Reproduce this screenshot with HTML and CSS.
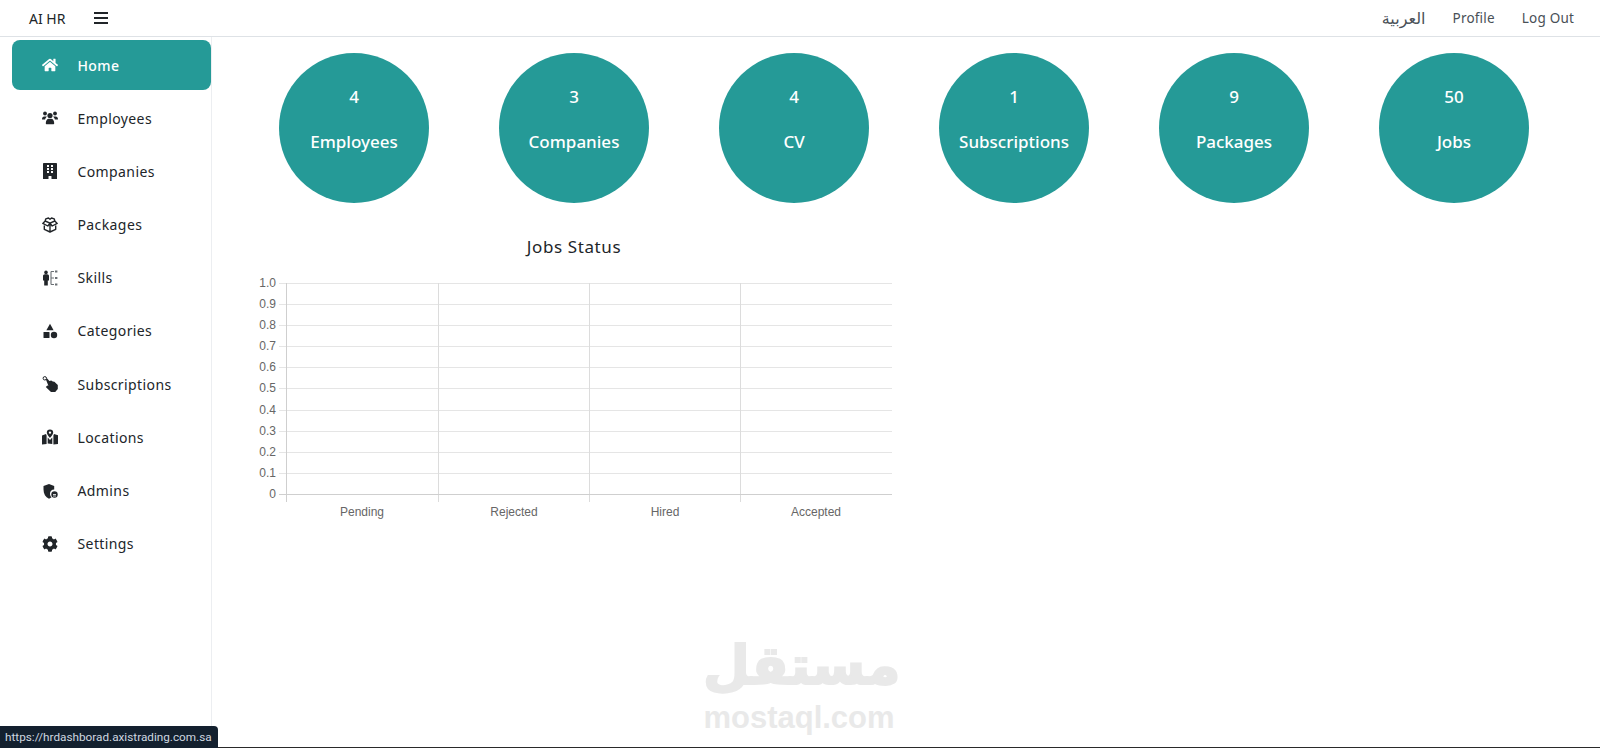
FILE: index.html
```html
<!DOCTYPE html>
<html lang="en">
<head>
    <meta charset="UTF-8">
    <meta name="viewport" content="width=device-width, initial-scale=1.0">
    <title>AI HR</title>
    <link rel="stylesheet" href="styles.css">
</head>
<body>
    <div class="navbar">
        <div class="navbar-left">
            <a class="brand">AI HR</a>
            <svg class="burger" viewBox="0 0 14 12" width="14" height="12"><path d="M0 1h14M0 6h14M0 11h14" stroke="#212529" stroke-width="2" fill="none"/></svg>
        </div>
        <div class="navbar-right">
            <a class="top-link top-link-ar" lang="ar">العربية</a>
            <a class="top-link">Profile</a>
            <a class="top-link">Log Out</a>
        </div>
    </div>

    <div class="wrapper">
        <div class="sidebar">
            <a class="side-item active">
                <svg class="side-icon" viewBox="0 0 576 512"><path d="M280.37 148.26L96 300.11V464a16 16 0 0 0 16 16l112.06-.29a16 16 0 0 0 15.92-16V368a16 16 0 0 1 16-16h64a16 16 0 0 1 16 16v95.64a16 16 0 0 0 16 16.05L464 480a16 16 0 0 0 16-16V300L295.67 148.26a12.19 12.19 0 0 0-15.3 0zM571.6 251.47L488 182.56V44.05a12 12 0 0 0-12-12h-56a12 12 0 0 0-12 12v72.61L318.47 43a48 48 0 0 0-61 0L4.34 251.47a12 12 0 0 0-1.6 16.9l25.5 31A12 12 0 0 0 45.15 301l235.22-193.74a12.19 12.19 0 0 1 15.3 0L530.9 301a12 12 0 0 0 16.9-1.6l25.5-31a12 12 0 0 0-1.7-16.93z"/></svg>
                <span>Home</span>
            </a>
            <a class="side-item">
                <svg class="side-icon" viewBox="0 0 16 14"><circle cx="3" cy="2.500" r="1.900"/><circle cx="13" cy="2.500" r="1.900"/><circle cx="8" cy="4.500" r="2.600"/><path d="M0 8.200C0 6.500 1 5.500 2.200 5.500h1.600c.4 0 .8.100 1.100.3C4 6.500 3.300 7.400 3.100 8.600H.6C.2 8.600 0 8.500 0 8.200zM16 8.200C16 6.500 15 5.500 13.800 5.500h-1.600c-.4 0-.8.100-1.100.3 .9.700 1.600 1.600 1.800 2.800h2.500c.4 0 .6-.1.600-.4zM3.800 12.300C3.800 9.800 5.200 7.800 6.800 7.800h2.400c1.600 0 3 2 3 4.500 0 .6-.4 1-.9 1H4.700c-.5 0-.9-.4-.9-1z"/></svg>
                <span>Employees</span>
            </a>
            <a class="side-item">
                <svg class="side-icon" viewBox="0 0 448 512"><path d="M436 512H12A12 12 0 0 1 0 500V24C0 10.745 10.745 0 24 0h400c13.255 0 24 10.745 24 24v476a12 12 0 0 1-12 12zM128 76c0-6.627 5.373-12 12-12h40c6.627 0 12 5.373 12 12v40c0 6.627-5.373 12-12 12h-40c-6.627 0-12-5.373-12-12V76zm0 96c0-6.627 5.373-12 12-12h40c6.627 0 12 5.373 12 12v40c0 6.627-5.373 12-12 12h-40c-6.627 0-12-5.373-12-12v-40zm52 148h-40c-6.627 0-12-5.373-12-12v-40c0-6.627 5.373-12 12-12h40c6.627 0 12 5.373 12 12v40c0 6.627-5.373 12-12 12zm92 192h-96v-84c0-6.627 5.373-12 12-12h72c6.627 0 12 5.373 12 12v84zm48-204c0 6.627-5.373 12-12 12h-40c-6.627 0-12-5.373-12-12v-40c0-6.627 5.373-12 12-12h40c6.627 0 12 5.373 12 12v40zm0-96c0 6.627-5.373 12-12 12h-40c-6.627 0-12-5.373-12-12v-40c0-6.627 5.373-12 12-12h40c6.627 0 12 5.373 12 12v40zm0-96c0 6.627-5.373 12-12 12h-40c-6.627 0-12-5.373-12-12V76c0-6.627 5.373-12 12-12h40c6.627 0 12 5.373 12 12v40z" fill-rule="evenodd"/></svg>
                <span>Companies</span>
            </a>
            <a class="side-item">
                <svg class="side-icon" viewBox="0 0 16 16"><path d="M8 6.200L3.200 4 3.800 1.800 6.500 1 8 2.200 9.500 1 12.200 1.800 12.800 4zM3.200 4L.8 6.400 5.800 9 8 6.200 10.200 9 15.200 6.400 12.800 4M2.300 8.500v3.800L8 15l5.700-2.700V8.500M8 6.200V15" fill="none" stroke="#212529" stroke-width="1.400" stroke-linejoin="round"/></svg>
                <span>Packages</span>
            </a>
            <a class="side-item">
                <svg class="side-icon" viewBox="0 0 16 16"><circle cx="4" cy="2.400" r="1.800"/><path d="M1 6c0-1 .8-1.800 1.800-1.800h2.400C6.200 4.200 7 5 7 6v4.500H5.800V15.500H2.200V10.500H1z"/><path d="M9 1.500h3M9 1.500v13M9 8h3M9 14.500h3" stroke="#6b7075" stroke-width="1.100" fill="none"/><path d="M13 .6h2.400v1.800H13zM13 7.100h2.400v1.800H13zM13 13.600h2.400v1.800H13z" fill="#6b7075"/></svg>
                <span>Skills</span>
            </a>
            <a class="side-item">
                <svg class="side-icon" viewBox="0 0 16 16"><path d="M8 .8l3.600 6.400H4.400z"/><rect x="1.500" y="9" width="6" height="6" rx=".6"/><circle cx="12" cy="12" r="3.200"/></svg>
                <span>Categories</span>
            </a>
            <a class="side-item">
                <svg class="side-icon" viewBox="0 0 16 16"><circle cx="2.800" cy="2.300" r="1.700" fill="none" stroke="#212529" stroke-width="1"/><path d="M3.800 3.200L5.200 2.400 7.400 5 9.200 4.600 10.800 5.600 12.400 5.800 15.800 9V13L13.200 16H9L6.600 13.800 3.800 11 5.400 9.600 6.400 9.800z"/></svg>
                <span>Subscriptions</span>
            </a>
            <a class="side-item">
                <svg class="side-icon" viewBox="0 0 16 16"><path d="M8 .4a3.200 3.200 0 0 1 3.200 3.200C11.200 5.600 8 9 8 9S4.800 5.600 4.800 3.600A3.200 3.200 0 0 1 8 .4zm0 2a1.200 1.200 0 1 0 0 2.400 1.200 1.200 0 0 0 0-2.400z"/><path d="M0 6.500L4 5l.6 1.500V15L0 15.500zM5.700 8.500L8 11l2.300-2.500V15l-4.600-.5zM11.400 6.500L12 5l4 1.200V15l-4.600.5z"/></svg>
                <span>Locations</span>
            </a>
            <a class="side-item">
                <svg class="side-icon" viewBox="0 0 16 16"><path d="M7 1l5.200 2v3.500c-2.600 0-4.200 2-4.200 4.200 0 1.500.6 2.800 1.600 3.600-.8.600-1.600 1-2.600 1.500C3.500 14 1.500 11 1.500 6.500V3z"/><circle cx="12.500" cy="11.500" r="3.200"/><path d="M11 11.500h3M11 13h3" stroke="#fff" stroke-width=".8"/></svg>
                <span>Admins</span>
            </a>
            <a class="side-item">
                <svg class="side-icon" viewBox="0 0 512 512"><path d="M487.4 315.7l-42.6-24.6c4.3-23.2 4.3-47 0-70.2l42.6-24.6c4.9-2.8 7.1-8.6 5.5-14-11.1-35.6-30-67.8-54.7-94.6-3.8-4.1-10-5.1-14.8-2.3L380.8 110c-17.9-15.4-38.5-27.3-60.8-35.1V25.8c0-5.6-3.9-10.5-9.4-11.7-36.7-8.2-74.3-7.8-109.2 0-5.5 1.2-9.4 6.1-9.4 11.7V75c-22.2 7.9-42.8 19.8-60.8 35.1L88.7 85.500c-4.9-2.800-11-1.900-14.800 2.300-24.700 26.700-43.600 58.900-54.700 94.600-1.700 5.400.6 11.200 5.500 14L67.300 221c-4.300 23.200-4.300 47 0 70.200l-42.600 24.600c-4.900 2.800-7.100 8.600-5.500 14 11.100 35.600 30 67.800 54.700 94.600 3.800 4.100 10 5.100 14.800 2.300l42.600-24.600c17.900 15.400 38.500 27.300 60.800 35.100v49.200c0 5.600 3.900 10.500 9.400 11.700 36.700 8.200 74.300 7.800 109.200 0 5.500-1.200 9.400-6.100 9.400-11.700v-49.200c22.200-7.900 42.800-19.800 60.800-35.100l42.600 24.600c4.900 2.800 11 1.900 14.800-2.300 24.700-26.700 43.600-58.900 54.700-94.600 1.500-5.500-.7-11.300-5.600-14.100zM256 336c-44.100 0-80-35.900-80-80s35.900-80 80-80 80 35.900 80 80-35.900 80-80 80z"/></svg>
                <span>Settings</span>
            </a>
        </div>

        <div class="content">
            <div class="stats">
                <div class="stat-col"><div class="circle"><span>4</span><span>Employees</span></div></div>
                <div class="stat-col"><div class="circle"><span>3</span><span>Companies</span></div></div>
                <div class="stat-col"><div class="circle"><span>4</span><span>CV</span></div></div>
                <div class="stat-col"><div class="circle"><span>1</span><span>Subscriptions</span></div></div>
                <div class="stat-col"><div class="circle"><span>9</span><span>Packages</span></div></div>
                <div class="stat-col"><div class="circle"><span>50</span><span>Jobs</span></div></div>
            </div>

            <div class="chart-box">
                <h4 class="chart-title">Jobs Status</h4>
                <svg class="chart" width="660" height="270" viewBox="0 0 660 270">
                    <g class="grid">
                        <path d="M35 21.500H648"/>
                        <path d="M35 42.500H648"/>
                        <path d="M35 63.500H648"/>
                        <path d="M35 84.500H648"/>
                        <path d="M35 105.500H648"/>
                        <path d="M35 126.500H648"/>
                        <path d="M35 148.500H648"/>
                        <path d="M35 169.500H648"/>
                        <path d="M35 190.500H648"/>
                        <path d="M35 211.500H648"/>
                    </g>
                    <g class="grid-v">
                        <path d="M194.500 21V240"/>
                        <path d="M345.500 21V240"/>
                        <path d="M496.500 21V240"/>
                    </g>
                    <g class="axis">
                        <path d="M35 232.500H648"/>
                        <path d="M42.500 21V240"/>
                    </g>
                    <g class="y-labels">
                        <text x="32" y="25">1.0</text>
                        <text x="32" y="46">0.9</text>
                        <text x="32" y="67">0.8</text>
                        <text x="32" y="88">0.7</text>
                        <text x="32" y="109">0.6</text>
                        <text x="32" y="130">0.5</text>
                        <text x="32" y="152">0.4</text>
                        <text x="32" y="173">0.3</text>
                        <text x="32" y="194">0.2</text>
                        <text x="32" y="215">0.1</text>
                        <text x="32" y="236">0</text>
                    </g>
                    <g class="x-labels">
                        <text x="118" y="254">Pending</text>
                        <text x="270" y="254">Rejected</text>
                        <text x="421" y="254">Hired</text>
                        <text x="572" y="254">Accepted</text>
                    </g>
                </svg>
            </div>
        </div>
    </div>
    <div class="bottom-line"></div>

    <div class="watermark">
        <div class="wm-ar" lang="ar">مستقل</div>
        <div class="wm-en">mostaql.com</div>
    </div>
    <div class="status-bubble">https://hrdashborad.axistrading.com.sa</div>
</body>
</html>
```

FILE: styles.css
```css
* {
    box-sizing: border-box;
}
html, body {
    height: 100%;
}
body {
    margin: 0;
    font-family: 'Noto Sans', 'DejaVu Sans', sans-serif;
    color: #212529;
    background-color: #fff;
    display: flex;
    flex-direction: column;
    overflow: hidden;
}
.navbar {
    height: 37px;
    flex-shrink: 0;
    display: flex;
    align-items: center;
    justify-content: space-between;
    padding: 0 26px 0 29px;
    border-bottom: 1px solid #dee2e6;
    font-size: 14px;
}
.navbar-left {
    display: flex;
    align-items: center;
    gap: 29px;
}
.brand {
    color: #212529;
}
.navbar-right {
    display: flex;
    align-items: center;
    gap: 27px;
}
.top-link {
    color: #495057;
    font-size: 13.500px;
    letter-spacing: 0.2px;
}
.top-link-ar {
    font-size: 16px;
    letter-spacing: 0;
}
.wrapper {
    flex: 1;
    display: flex;
    min-height: 0;
}
.sidebar {
    width: 212px;
    flex-shrink: 0;
    padding: 3px 0 0 12px;
    border-right: 1px solid #eceef1;
}
.side-item {
    height: 50px;
    margin-bottom: 3.200px;
    display: flex;
    align-items: center;
    gap: 19.500px;
    padding-left: 30px;
    border-radius: 8px;
    font-size: 14px;
    letter-spacing: 0.4px;
    color: #212529;
}
.side-item.active {
    background-color: #259a97;
    color: #fff;
    font-weight: 500;
}
.side-icon {
    width: 16px;
    height: 16px;
    fill: #212529;
    flex-shrink: 0;
}
.side-item.active .side-icon {
    fill: #fff;
}
.content {
    flex: 1;
    padding: 16px 0 0 32px;
}
.stats {
    display: grid;
    grid-template-columns: repeat(6, 220px);
}
.stat-col {
    display: flex;
    justify-content: center;
}
.circle {
    width: 150px;
    height: 150px;
    border-radius: 50%;
    background-color: #259a97;
    color: #fff;
    display: flex;
    flex-direction: column;
    align-items: center;
    gap: 21px;
    padding-top: 32px;
    font-size: 17px;
    font-weight: 500;
    line-height: 24px;
}
.chart-box {
    width: 660px;
    margin-top: 26px;
}
.chart-title {
    margin: 0;
    height: 33px;
    line-height: 36px;
    text-align: center;
    font-size: 17px;
    font-weight: 400;
    letter-spacing: 0.6px;
    color: #212529;
}
.chart {
    display: block;
}
.grid path {
    stroke: #e5e5e5;
    stroke-width: 1;
    fill: none;
}
.grid-v path {
    stroke: #dcdcdc;
    stroke-width: 1;
    fill: none;
}
.axis path {
    stroke: #cfcfcf;
    stroke-width: 1;
    fill: none;
}
.y-labels text,
.x-labels text {
    font-family: 'Liberation Sans', Arial, sans-serif;
    font-size: 12px;
    fill: #666;
}
.y-labels text {
    text-anchor: end;
}
.x-labels text {
    text-anchor: middle;
}
.bottom-line {
    height: 1px;
    flex-shrink: 0;
    background-color: #2a2a2a;
}
.watermark {
    position: absolute;
    left: 703px;
    top: 631px;
    width: 192px;
    text-align: center;
    color: #e9e9e9;
    pointer-events: none;
}
.wm-ar {
    font-family: 'DejaVu Sans', sans-serif;
    font-weight: 700;
    font-size: 54px;
    line-height: 70px;
    -webkit-text-stroke: 2px #e9e9e9;
}
.wm-en {
    font-family: 'Liberation Sans', Arial, sans-serif;
    font-weight: 700;
    font-size: 31px;
    line-height: 34px;
}
.status-bubble {
    position: absolute;
    left: 0;
    bottom: 0;
    width: 218px;
    height: 22px;
    padding-left: 5px;
    line-height: 22px;
    font-family: 'Roboto', sans-serif;
    font-size: 11.750px;
    white-space: nowrap;
    color: #cfd8e0;
    background-color: #13202e;
    border-top-right-radius: 4px;
}
```
